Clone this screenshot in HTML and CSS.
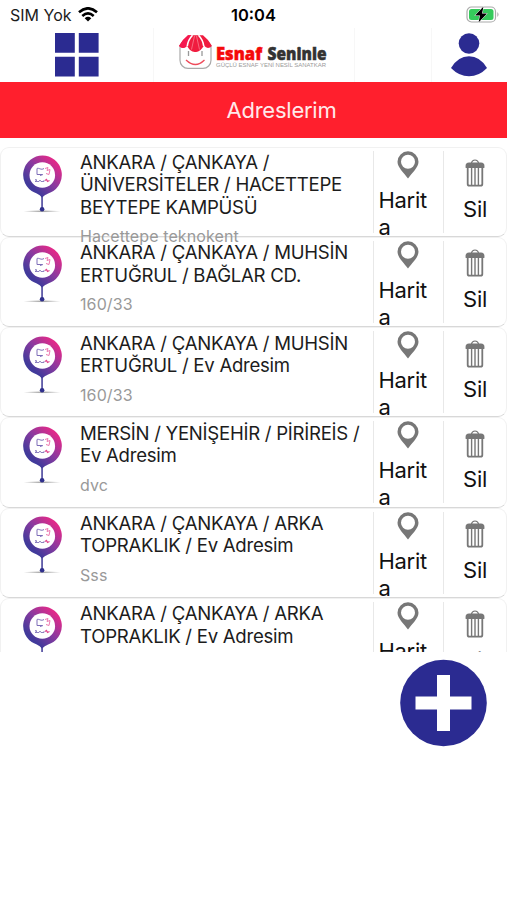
FILE: index.html
```html
<!DOCTYPE html>
<html lang="tr">
<head>
    <meta charset="UTF-8">
    <meta name="viewport" content="width=device-width, initial-scale=1.0">
    <title>Adreslerim</title>
    <link rel="stylesheet" href="styles.css">
</head>
<body>

    <!-- Shared icons -->
    <svg class="icon-defs" width="0" height="0">
        <defs>
            <linearGradient id="dropColor" gradientUnits="userSpaceOnUse" x1="12" y1="34" x2="36" y2="10">
                <stop offset="0" stop-color="#423a9b"/>
                <stop offset="0.5" stop-color="#8a3a9f"/>
                <stop offset="1" stop-color="#e02a8a"/>
            </linearGradient>
            <radialGradient id="dropShadow">
                <stop offset="0" stop-color="#999"/>
                <stop offset="1" stop-color="#fff"/>
            </radialGradient>
        </defs>
        <symbol id="drop" viewBox="0 0 40 60">
            <ellipse cx="20" cy="56.3" rx="19" ry="1.3" fill="url(#dropShadow)"/>
            <path d="M20.500 .5a19.400 19.400 0 0 1 8.500 36.800C24 39.800 21.200 40.500 20.700 43V54h-1.200V43C19 40.500 17 39.800 12 37.300A19.400 19.400 0 0 1 20.500 .5z" fill="url(#dropColor)"/>
            <path d="M20.100 42v12" stroke="#5a57a5" stroke-width="1.300"/>
            <circle cx="20.100" cy="54.300" r="2.300" fill="#30308c"/>
            <circle cx="20.300" cy="20" r="12.800" fill="#fff"/>
            <path d="M15 13.500c2-1 4 2 7 0M15 13.500v6h5M18 20.500l3-1" fill="none" stroke="#7d6db8" stroke-width="1"/>
            <path d="M23 13.500l3-1-1 3 3-1-1 5-3-1" fill="none" stroke="#ed79b0" stroke-width="1"/>
            <path d="M13 24.500l2 .5-2 1.500h4l1-1.500 1 1.500h3v-1.500" fill="none" stroke="#8377bb" stroke-width="0.900"/>
            <path d="M23 25.500l1.500-1 1 2 2-1" fill="none" stroke="#e04791" stroke-width="1.200"/>
        </symbol>
        <symbol id="pin" viewBox="0 0 22 28">
            <path fill-rule="evenodd" d="M11 .3A10.500 10.500 0 0 1 21.500 10.800C21.500 16.500 15 22 11 27.500 7 22 .5 16.500.5 10.800A10.500 10.500 0 0 1 11 .3zm0 3.500a7 7 0 1 0 0 14 7 7 0 0 0 0-14z" fill="#777"/>
        </symbol>
        <symbol id="trash" viewBox="0 0 20 28">
            <path d="M6.500 4Q7 1 10 1t3.500 3" fill="none" stroke="#777" stroke-width="1.200"/>
            <path d="M.7 9Q-.2 3.500 4 3.500h12q4.200 0 3.300 5.500z" fill="#777"/>
            <path d="M2.700 9v16q0 1.700 1.700 1.700h11.200q1.700 0 1.700-1.700V9" fill="none" stroke="#777" stroke-width="1.800"/>
            <path d="M6.600 9v17M10 9v17M13.400 9v17" stroke="#777" stroke-width="1.400"/>
        </symbol>
    </svg>

    <div class="status-bar">
        <div class="carrier">
            <span>SIM Yok</span>
            <svg width="20" height="15" viewBox="0 0 20 15" fill="none" stroke="#000" stroke-width="2.600">
                <path d="M1 5.300Q10-2.700 19 5.300"/>
                <path d="M4.300 8.900Q10 3.900 15.700 8.900"/>
                <path d="M6.700 11.200Q10 8.500 13.300 11.200L10 14.600z" fill="#000" stroke="none"/>
            </svg>
        </div>
        <div class="clock">10:04</div>
        <svg class="battery" width="34" height="18" viewBox="0 0 34 18">
            <rect x="1" y="1" width="28.500" height="15" rx="4.500" fill="#fff" stroke="#aaa" stroke-width="1.200"/>
            <rect x="3" y="3" width="24.500" height="11" rx="2.500" fill="#35ca5b"/>
            <path d="M31.300 6q2.500 2.500 0 5z" fill="#aaa"/>
            <path d="M17.500 .5L9 9.500h5L12.500 16.500 21 7.500H16z" fill="#000" stroke="#fff" stroke-width="1" paint-order="stroke"/>
        </svg>
    </div>

    <div class="navbar">
        <div class="nav-menu">
            <svg width="44" height="44" viewBox="0 0 44 44" fill="#2b2b91">
                <path d="M0 0h19.800v19.800H0zM23.800 0h19.800v19.800H23.800zM0 23.800h19.800v19.800H0zM23.800 23.800h19.800v19.800H23.800z"/>
            </svg>
        </div>
        <div class="nav-logo">
            <svg width="152" height="40" viewBox="0 0 152 40">
                <rect x="2" y="5" width="31" height="28.300" rx="8" fill="#fff" stroke="#aaa" stroke-width="1.200"/>
                <path d="M10 .3h15Q31 5 34 11Q29.500 15 26 10.500Q22 17.500 17.500 17Q12 17.500 9 10.500Q5.500 15 1 11Q4 5 10 .3z" fill="#f01c3f"/>
                <path d="M10 .3h4Q9.500 5 9 11Q5.500 15 1 11Q4 5 10 .3z" fill="#f5184f"/>
                <path d="M14.500 .3Q10 5 9.300 11M20.500 .3Q25 5 25.700 11" fill="none" stroke="#fff" stroke-width="1.600"/>
                <path d="M16.500 1L13.500 14.500M18.500 1l3 13.500" stroke="#f98a9b" stroke-width="0.700"/>
                <path d="M10.500 16v5M24 16v5" stroke="#999" stroke-width="1.300"/>
                <path d="M8 25q9.500 9 18.500 0" fill="none" stroke="#ef4b5b" stroke-width="1.300"/>
                <text class="logo-name" x="38" y="24.500" fill="#f50a0a" stroke="#f50a0a" textLength="46" lengthAdjust="spacingAndGlyphs">Esnaf</text>
                <text class="logo-name" x="89.500" y="24.500" fill="#333" stroke="#333" textLength="59" lengthAdjust="spacingAndGlyphs">Seninle</text>
                <text class="logo-slogan" x="38" y="32.200" textLength="110" lengthAdjust="spacingAndGlyphs">GÜÇLÜ ESNAF YENİ NESİL SANATKAR</text>
            </svg>
        </div>
        <div class="nav-empty"></div>
        <div class="nav-user">
            <svg width="36" height="44" viewBox="0 0 36 44" fill="#2b2b91">
                <circle cx="18" cy="10.500" r="10.300"/>
                <path d="M0 35Q7 23.300 18 23.300T36 35Q28 43.300 18 43.300T0 35z"/>
            </svg>
        </div>
    </div>

    <div class="title-bar">Adreslerim</div>

    <div class="address-list">
        <div class="address">
            <svg class="drop"><use href="#drop"/></svg>
            <div class="info">
                <div class="name">ANKARA / ÇANKAYA /<br>ÜNİVERSİTELER / HACETTEPE<br>BEYTEPE KAMPÜSÜ</div>
                <div class="detail">Hacettepe teknokent</div>
            </div>
            <div class="map"><svg class="pin"><use href="#pin"/></svg><span>Harita</span></div>
            <div class="delete"><svg class="trash"><use href="#trash"/></svg><span>Sil</span></div>
        </div>
        <div class="address">
            <svg class="drop"><use href="#drop"/></svg>
            <div class="info">
                <div class="name">ANKARA / ÇANKAYA / MUHSİN<br>ERTUĞRUL / BAĞLAR CD.</div>
                <div class="detail">160/33</div>
            </div>
            <div class="map"><svg class="pin"><use href="#pin"/></svg><span>Harita</span></div>
            <div class="delete"><svg class="trash"><use href="#trash"/></svg><span>Sil</span></div>
        </div>
        <div class="address">
            <svg class="drop"><use href="#drop"/></svg>
            <div class="info">
                <div class="name">ANKARA / ÇANKAYA / MUHSİN<br>ERTUĞRUL / Ev Adresim</div>
                <div class="detail">160/33</div>
            </div>
            <div class="map"><svg class="pin"><use href="#pin"/></svg><span>Harita</span></div>
            <div class="delete"><svg class="trash"><use href="#trash"/></svg><span>Sil</span></div>
        </div>
        <div class="address">
            <svg class="drop"><use href="#drop"/></svg>
            <div class="info">
                <div class="name">MERSİN / YENİŞEHİR / PİRİREİS /<br>Ev Adresim</div>
                <div class="detail">dvc</div>
            </div>
            <div class="map"><svg class="pin"><use href="#pin"/></svg><span>Harita</span></div>
            <div class="delete"><svg class="trash"><use href="#trash"/></svg><span>Sil</span></div>
        </div>
        <div class="address">
            <svg class="drop"><use href="#drop"/></svg>
            <div class="info">
                <div class="name">ANKARA / ÇANKAYA / ARKA<br>TOPRAKLIK / Ev Adresim</div>
                <div class="detail">Sss</div>
            </div>
            <div class="map"><svg class="pin"><use href="#pin"/></svg><span>Harita</span></div>
            <div class="delete"><svg class="trash"><use href="#trash"/></svg><span>Sil</span></div>
        </div>
        <div class="address">
            <svg class="drop"><use href="#drop"/></svg>
            <div class="info">
                <div class="name">ANKARA / ÇANKAYA / ARKA<br>TOPRAKLIK / Ev Adresim</div>
            </div>
            <div class="map"><svg class="pin"><use href="#pin"/></svg><span>Harita</span></div>
            <div class="delete"><svg class="trash"><use href="#trash"/></svg><span>Sil</span></div>
        </div>
    </div>

    <div class="add-row">
        <svg width="88" height="88" viewBox="0 0 88 88">
            <circle cx="43.500" cy="44" r="43.300" fill="#2b2b91"/>
            <path d="M37 16h13v21.500H71.500v13H50V72h-13V50.500H15.500v-13h21.500z" fill="#fff"/>
        </svg>
    </div>

</body>
</html>
```

FILE: styles.css
```css
* {
    box-sizing: border-box;
}

body {
    margin: 0;
    height: 900px;
    overflow: hidden;
    background: #fff;
    color: #1c1c1c;
    font-family: Inter, "Liberation Sans", sans-serif;
}

svg {
    display: block;
    flex: none;
}

.icon-defs {
    position: absolute;
}

.status-bar {
    display: grid;
    grid-template-columns: 1fr auto 1fr;
    align-items: center;
    height: 28px;
    padding: 1px 7px 0 10px;
    font-size: 16px;
}

.carrier {
    display: flex;
    align-items: center;
    gap: 6px;
}

.clock {
    margin-right: 3px;
    color: #000;
    font-weight: 600;
    font-size: 16.500px;
}

.battery {
    justify-self: end;
}

.navbar {
    display: grid;
    grid-template-columns: 154px 201px 77px 75px;
    height: 54px;
}

.navbar > div {
    display: flex;
    align-items: center;
    justify-content: center;
    border-right: 1px solid #f7f7f7;
}

.navbar .nav-user {
    padding-right: 2px;
    border-right: none;
}

.logo-name {
    font-family: "Open Sans", sans-serif;
    font-weight: 800;
    font-size: 18px;
    stroke-width: 0.5px;
}

.logo-slogan {
    font-family: "Liberation Sans", sans-serif;
    font-size: 6px;
    fill: #999;
}

.title-bar {
    height: 56px;
    padding-left: 56px;
    background: #ff1f2d;
    color: #ffe9ea;
    font-size: 22px;
    letter-spacing: -0.250px;
    line-height: 57px;
    text-align: center;
}

.address-list {
    height: 514px;
    padding-top: 8.500px;
    overflow: hidden;
}

.address {
    display: grid;
    grid-template-columns: 79px 293px 70px 1fr;
    height: 90.300px;
    border: 1px solid #f1f1f1;
    border-bottom-color: #d8d8d8;
    border-radius: 9px;
}

.drop {
    width: 40px;
    height: 60px;
    margin: 7.500px 0 0 21px;
}

.info {
    padding-top: 3.500px;
    white-space: nowrap;
}

.name {
    font-size: 18.600px;
    letter-spacing: -0.270px;
    line-height: 22.300px;
}

.detail {
    margin-top: 8.500px;
    color: #999;
    font-size: 16px;
    letter-spacing: 0.100px;
    line-height: 20px;
}

.map,
.delete {
    display: flex;
    flex-direction: column;
    align-items: center;
    height: 82px;
    margin-top: 3px;
    border-left: 1px solid #e8e8e8;
    color: #111;
    font-size: 22px;
    letter-spacing: -0.300px;
    line-height: 27px;
}

.map {
    padding-right: 2px;
}

.map span {
    width: 58px;
    word-break: break-all;
}

.pin {
    width: 22px;
    height: 28px;
    margin-bottom: 8px;
}

.trash {
    width: 20px;
    height: 28px;
    margin: 8.500px 0;
}

.add-row {
    display: flex;
    justify-content: flex-end;
    padding: 7px 19px 0 0;
}
```
